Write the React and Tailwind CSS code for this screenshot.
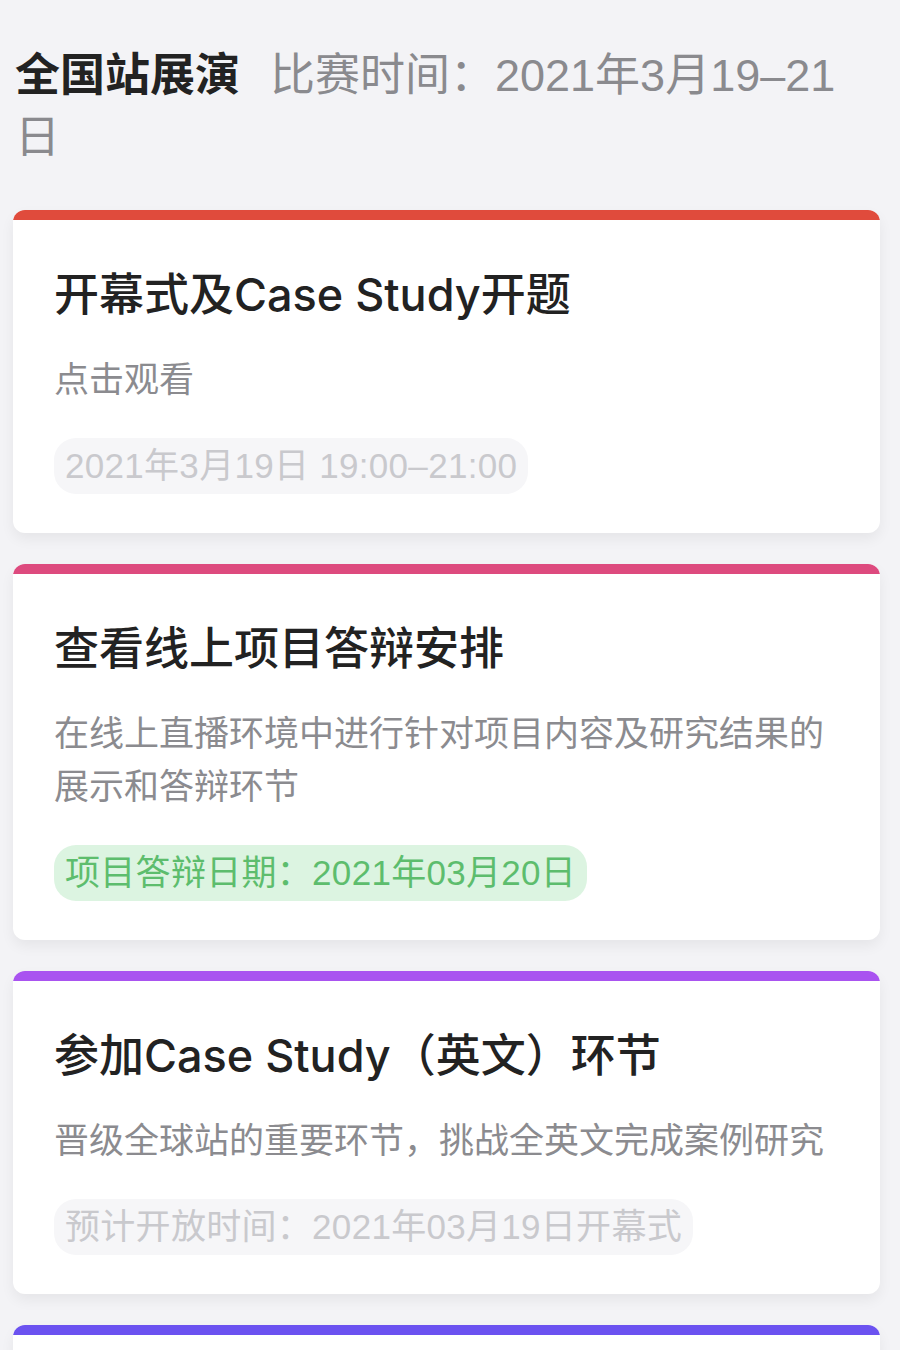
const items = [
    {
        bar: 'bg-[#e04b3c]',
        title: '开幕式及Case Study开题',
        desc: '点击观看',
        tag: '2021年3月19日 19:00–21:00',
        tagClass: 'bg-[#f6f6f8] text-[#c9c9cd]'
    },
    {
        bar: 'bg-[#dd4a7e]',
        title: '查看线上项目答辩安排',
        desc: '在线上直播环境中进行针对项目内容及研究结果的展示和答辩环节',
        tag: '项目答辩日期：2021年03月20日',
        tagClass: 'bg-[#dcf4e1] text-[#5dbd6d]'
    },
    {
        bar: 'bg-[#a953f0]',
        title: '参加Case Study（英文）环节',
        desc: '晋级全球站的重要环节，挑战全英文完成案例研究',
        tag: '预计开放时间：2021年03月19日开幕式',
        tagClass: 'bg-[#f6f6f8] text-[#c9c9cd]'
    },
    {
        bar: 'bg-[#6b52f0]',
        title: '',
        desc: '',
        tag: '',
        tagClass: ''
    }
];

function StageCard({ item }) {
    return (
        <div className="bg-white rounded-[12px] overflow-hidden shadow-[0_6px_14px_rgba(0,0,0,0.06)]">
            <div className={`h-[10px] ${item.bar}`} />
            {item.title && (
                <div className="pt-[45px] pb-[39px] pl-[41px] pr-[40px]">
                    <h2 className="font-['Inter','Noto_Sans_CJK_SC',sans-serif] text-[45px] leading-[60px] font-medium text-[#222]">{item.title}</h2>
                    <p className="mt-[28px] text-[35px] leading-[53px] text-[#8b8b8f]">{item.desc}</p>
                    <div className="mt-[32px] flex">
                        <span className={`h-[56px] px-[11px] rounded-[22px] flex items-center text-[35px] tracking-[0.3px] ${item.tagClass}`}>
                            {item.tag}
                        </span>
                    </div>
                </div>
            )}
            {!item.title && <div className="h-[200px]" />}
        </div>
    );
}

export default function App() {
    return (
        <div
            className="min-h-[1350px] bg-[#f3f3f6] pt-[45px] px-[13px] overflow-hidden"
            style={{ fontFamily: '"Liberation Sans", "Noto Sans CJK SC", sans-serif' }}
        >
            {/* 标题 */}
            <div className="pl-[2px] pr-[40px] text-[45px] leading-[62px]">
                <span className="font-bold text-[#222] mr-[30px]">全国站展演</span>
                <span className="text-[#8a8a8e]">比赛时间：2021年3月19–21日</span>
            </div>

            {/* 卡片列表 */}
            <div className="mt-[41px] mr-[7px] flex flex-col gap-[31px]">
                {items.map((item, i) => (
                    <StageCard key={i} item={item} />
                ))}
            </div>
        </div>
    );
}
